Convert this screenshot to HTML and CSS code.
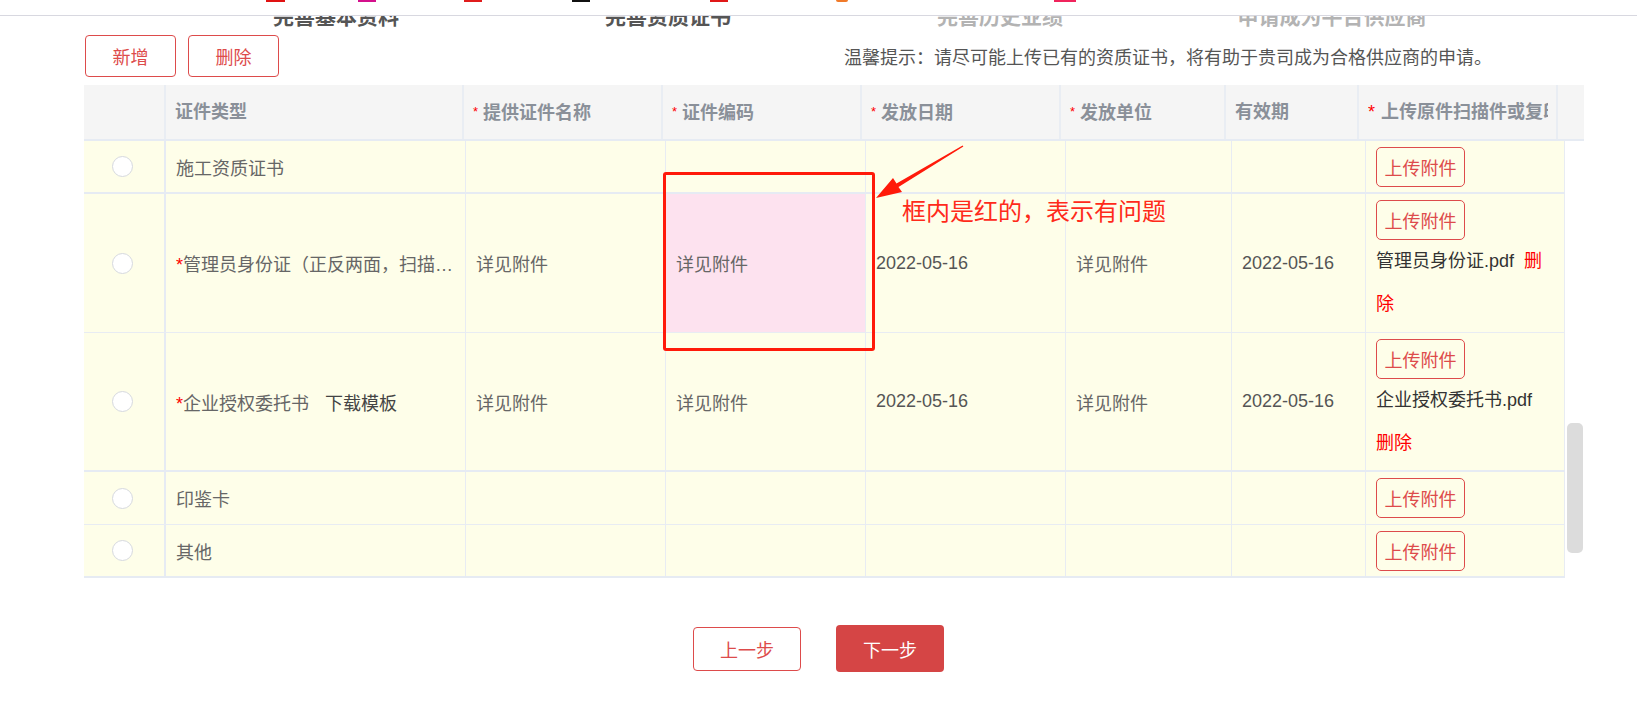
FILE: index.html
```html
<!DOCTYPE html>
<html lang="zh-CN">
<head>
    <meta charset="UTF-8">
    <title>完善资质证书</title>
    <link rel="stylesheet" href="styles.css">
</head>
<body>
    <!-- 顶部导航（被截断） -->
    <div class="topbar">
        <span class="mark m1"></span>
        <span class="mark m2"></span>
        <span class="mark m3"></span>
        <span class="mark m4"></span>
        <span class="mark m5"></span>
        <span class="mark m6"></span>
        <span class="mark m7"></span>
    </div>

    <div class="page">
        <div class="steps">
            <div class="step done">完善基本资料</div>
            <div class="step done">完善资质证书</div>
            <div class="step">完善历史业绩</div>
            <div class="step">申请成为平台供应商</div>
        </div>

        <div class="toolbar">
            <button class="btn-outline">新增</button>
            <button class="btn-outline">删除</button>
            <p class="hint">温馨提示：请尽可能上传已有的资质证书，将有助于贵司成为合格供应商的申请。</p>
        </div>

        <div class="table">
            <div class="thead">
                <div class="th"></div>
                <div class="th">证件类型</div>
                <div class="th"><i class="req">*</i>提供证件名称</div>
                <div class="th"><i class="req">*</i>证件编码</div>
                <div class="th"><i class="req">*</i>发放日期</div>
                <div class="th"><i class="req">*</i>发放单位</div>
                <div class="th">有效期</div>
                <div class="th"><div class="clip"><i class="req big">*</i>上传原件扫描件或复印件</div></div>
                <div class="th gutter"></div>
            </div>

            <div class="body-wrap">
                <div class="tbody">
                    <div class="row row-s thick">
                        <div class="td"><span class="radio"></span></div>
                        <div class="td">施工资质证书</div>
                        <div class="td"></div>
                        <div class="td"></div>
                        <div class="td"></div>
                        <div class="td"></div>
                        <div class="td"></div>
                        <div class="td upload"><button class="btn-upload">上传附件</button></div>
                    </div>
                    <div class="row row-l">
                        <div class="td"><span class="radio"></span></div>
                        <div class="td"><span class="ellipsis"><b class="star">*</b>管理员身份证（正反两面，扫描件或复印件加盖公章）</span></div>
                        <div class="td">详见附件</div>
                        <div class="td error">详见附件</div>
                        <div class="td date">2022-05-16</div>
                        <div class="td">详见附件</div>
                        <div class="td date">2022-05-16</div>
                        <div class="td upload">
                            <button class="btn-upload">上传附件</button>
                            <div class="files">管理员身份证.pdf<span class="gap"></span><a class="del">删除</a></div>
                        </div>
                    </div>
                    <div class="row row-l thick">
                        <div class="td"><span class="radio"></span></div>
                        <div class="td"><span><b class="star">*</b>企业授权委托书</span><a class="tpl">下载模板</a></div>
                        <div class="td">详见附件</div>
                        <div class="td">详见附件</div>
                        <div class="td date">2022-05-16</div>
                        <div class="td">详见附件</div>
                        <div class="td date">2022-05-16</div>
                        <div class="td upload">
                            <button class="btn-upload">上传附件</button>
                            <div class="files">企业授权委托书.pdf<span class="gap"></span><a class="del">删除</a></div>
                        </div>
                    </div>
                    <div class="row row-s">
                        <div class="td"><span class="radio"></span></div>
                        <div class="td">印鉴卡</div>
                        <div class="td"></div>
                        <div class="td"></div>
                        <div class="td"></div>
                        <div class="td"></div>
                        <div class="td"></div>
                        <div class="td upload"><button class="btn-upload">上传附件</button></div>
                    </div>
                    <div class="row row-s thick">
                        <div class="td"><span class="radio"></span></div>
                        <div class="td">其他</div>
                        <div class="td"></div>
                        <div class="td"></div>
                        <div class="td"></div>
                        <div class="td"></div>
                        <div class="td"></div>
                        <div class="td upload"><button class="btn-upload">上传附件</button></div>
                    </div>
                </div>
                <div class="scrollbar"><div class="thumb"></div></div>
            </div>
        </div>
    </div>

    <div class="footer">
        <button class="btn-prev">上一步</button>
        <button class="btn-next">下一步</button>
    </div>

    <!-- 标注 -->
    <div class="note-box"></div>
    <svg class="note-arrow" width="1637" height="718" viewBox="0 0 1637 718">
        <polygon points="876,198 893,178 896.5,183.5 962.6,145.4 963.4,146.6 898.5,187 902,192" fill="#ff1a0a"/>
    </svg>
    <div class="note-text">框内是红的，表示有问题</div>
</body>
</html>
```

FILE: styles.css
```css
body {
    margin: 0;
    font-family: "Liberation Sans", "Noto Sans CJK SC", sans-serif;
    font-size: 18px;
    color: #666;
    background: #fff;
    position: relative;
    height: 718px;
    overflow: hidden;
}
button {
    font-family: inherit;
    font-size: 18px;
    cursor: pointer;
    padding: 0;
}

/* 顶部栏 */
.topbar {
    position: fixed;
    top: 0;
    left: 0;
    right: 0;
    height: 15px;
    background: #fff;
    border-bottom: 1px solid #d8d8e0;
    display: flex;
    align-items: flex-start;
    z-index: 5;
}
.mark {
    height: 2px;
    width: 18px;
}
.m1 { margin-left: 266px; width: 19px; background: #e01212; }
.m2 { margin-left: 73px; background: #d4108c; }
.m3 { margin-left: 88px; background: #e01c1c; }
.m4 { margin-left: 90px; background: #111; }
.m5 { margin-left: 120px; background: #e01818; }
.m6 { margin-left: 108px; width: 12px; background: #f07a2a; border-radius: 0 0 6px 6px; }
.m7 { margin-left: 206px; width: 22px; background: #f0245c; }

.page {
    width: 1500px;
    margin-left: 84px;
}

/* 步骤 */
.steps {
    display: grid;
    grid-template-columns: repeat(4, 332px);
    padding-left: 86px;
    height: 35px;
    line-height: 33px;
    font-size: 21px;
    font-weight: bold;
    color: #b3b3b3;
    text-align: center;
}
.step.done {
    color: #555;
}

/* 工具栏 */
.toolbar {
    display: flex;
    align-items: center;
    gap: 12px;
    height: 42px;
    margin-bottom: 8px;
    padding-left: 1px;
}
.btn-outline {
    width: 91px;
    height: 42px;
    border: 1px solid #dd4b4b;
    border-radius: 4px;
    background: #fff;
    color: #dd4b4b;
}
.hint {
    margin: 0 92px 0 auto;
    color: #555;
}

/* 表格 */
.thead {
    display: grid;
    grid-template-columns: 82px 298px 199px 199px 199px 165px 133px 199px 26px;
    height: 56px;
    box-sizing: border-box;
    background: #f5f5f5;
    border-bottom: 2px solid #e6ebf3;
}
.th {
    border-right: 2px solid #e9edf3;
    padding: 0 8px 0 9px;
    line-height: 54px;
    font-weight: bold;
    color: #8a9099;
    white-space: nowrap;
    overflow: hidden;
}
.th.gutter {
    border-right: none;
}
.clip {
    overflow: hidden;
}
.req {
    font-style: normal;
    font-weight: normal;
    font-size: 13px;
    color: #f00;
    margin-right: 5px;
    vertical-align: 3px;
}
.req.big {
    font-size: 18px;
    margin-right: 6px;
    vertical-align: 0;
}
.body-wrap {
    display: flex;
}
.tbody {
    width: 1481px;
}
.row {
    display: grid;
    grid-template-columns: 82px 300px 200px 200px 200px 166px 134px 199px;
    background: #fefee9;
    box-sizing: border-box;
    border-bottom: 1px solid #e8ecf3;
}
.row.thick {
    border-bottom: 2px solid #e6ebf3;
}
.row-s {
    height: 53px;
}
.row-l {
    height: 139px;
}
.td {
    display: flex;
    align-items: center;
    padding: 0 10px;
    border-right: 1px solid #e8ecf3;
    min-width: 0;
    white-space: nowrap;
}
.td:first-child {
    justify-content: center;
    border-right: 2px solid #e6ebf3;
    padding: 0 3px 0 0;
}
.td.error {
    background: #fde2ef;
}
.td.date {
    color: #555;
}
.radio {
    width: 21px;
    height: 21px;
    box-sizing: border-box;
    border: 1px solid #d6d9df;
    border-radius: 50%;
    background: #fff;
}
.ellipsis {
    overflow: hidden;
    text-overflow: ellipsis;
}
.star {
    color: #f00;
    font-weight: normal;
}
.tpl {
    color: #444;
    margin-left: 16px;
}
.td.upload {
    flex-direction: column;
    align-items: flex-start;
    justify-content: center;
    white-space: normal;
}
.btn-upload {
    width: 89px;
    height: 40px;
    border: 1px solid #dd4b4b;
    border-radius: 5px;
    background: transparent;
    color: #dd4b4b;
    flex-shrink: 0;
}
.files {
    line-height: 43px;
    color: #333;
}
.gap {
    display: inline-block;
    width: 10px;
}
.del {
    color: #f00;
}
.scrollbar {
    width: 19px;
}
.thumb {
    width: 16px;
    height: 130px;
    margin: 282px 0 0 2px;
    background: #dcdcdc;
    border-radius: 5px;
}

/* 底部按钮 */
.footer {
    display: flex;
    justify-content: center;
    align-items: center;
    gap: 35px;
    margin-top: 47px;
}
.btn-prev,
.btn-next {
    width: 108px;
    border-radius: 4px;
}
.btn-prev {
    height: 44px;
    border: 1px solid #dd4b4b;
    background: #fff;
    color: #dd4b4b;
}
.btn-next {
    height: 47px;
    border: none;
    background: #d54545;
    color: #fff;
}

/* 标注层 */
.note-box {
    position: absolute;
    left: 663px;
    top: 172px;
    width: 212px;
    height: 179px;
    box-sizing: border-box;
    border: 3px solid #ff1a0a;
    border-radius: 3px;
}
.note-arrow {
    position: absolute;
    left: 0;
    top: 0;
    pointer-events: none;
}
.note-text {
    position: absolute;
    left: 902px;
    top: 195px;
    font-size: 24px;
    line-height: 30px;
    color: #ff2a1a;
    font-family: "Noto Sans CJK SC", sans-serif;
}
```
